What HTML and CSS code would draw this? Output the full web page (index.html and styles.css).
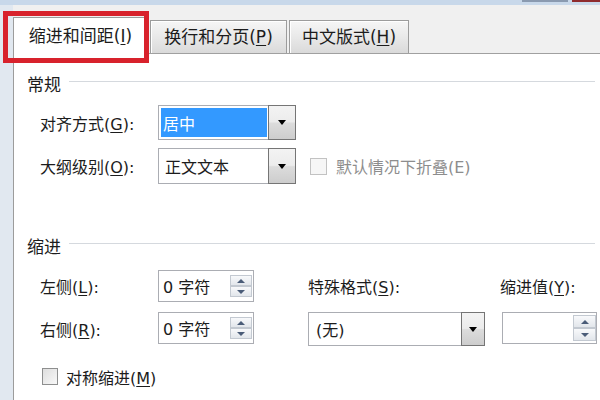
FILE: index.html
```html
<!DOCTYPE html>
<html lang="zh-CN">
<head>
<meta charset="utf-8">
<title>段落</title>
<link rel="stylesheet" href="styles.css">
</head>
<body>
<div class="screen">
  <div class="chrome-top">
    <span class="chrome-fill"></span>
    <span class="chrome-btn"></span>
    <span class="chrome-close"></span>
  </div>
  <div class="window">
    <div class="chrome-left"></div>
    <div class="dialog">
      <div class="tabs">
        <div class="tab tab-active">缩进和间距(<u>I</u>)</div>
        <div class="tab tab-wide">换行和分页(<u>P</u>)</div>
        <div class="tab tab-narrow">中文版式(<u>H</u>)</div>
      </div>
      <div class="panel">
        <div class="section-head">常规</div>
        <div class="general">
          <span class="label">对齐方式(<u>G</u>):</span>
          <div class="select">
            <span class="value value-selected">居中</span>
            <span class="dd-btn"><i class="tri-down"></i></span>
          </div>
          <span class="label">大纲级别(<u>O</u>):</span>
          <div class="select">
            <span class="value">正文文本</span>
            <span class="dd-btn"><i class="tri-down"></i></span>
          </div>
          <div class="check check-disabled"><span class="box"></span><span>默认情况下折叠(E)</span></div>
        </div>

        <div class="section-head indent-head">缩进</div>
        <div class="indent">
          <span class="label c1">左侧(<u>L</u>):</span>
          <div class="spinner c2">
            <span class="spin-text">0 字符</span>
            <span class="spin-btns"><span class="spin-btn"><i class="tri-up"></i></span><span class="spin-btn"><i class="tri-dn"></i></span></span>
          </div>
          <span class="label c4">特殊格式(<u>S</u>):</span>
          <span class="label c6 label-shift">缩进值(<u>Y</u>):</span>

          <span class="label c1">右侧(<u>R</u>):</span>
          <div class="spinner c2">
            <span class="spin-text">0 字符</span>
            <span class="spin-btns"><span class="spin-btn"><i class="tri-up"></i></span><span class="spin-btn"><i class="tri-dn"></i></span></span>
          </div>
          <div class="select select-special c4">
            <span class="value value-special">(无)</span>
            <span class="dd-btn dd-narrow"><i class="tri-down"></i></span>
          </div>
          <div class="spinner spinner-tall c6">
            <span class="spin-text"></span>
            <span class="spin-btns"><span class="spin-btn"><i class="tri-up"></i></span><span class="spin-btn"><i class="tri-dn"></i></span></span>
          </div>
        </div>

        <div class="check check-row"><span class="box box-enabled"></span><span>对称缩进(<u>M</u>)</span></div>
      </div>
    </div>
  </div>
  <div class="annotation"></div>
</div>
</body>
</html>
```

FILE: styles.css
```css
* { box-sizing: border-box; }
html, body { margin: 0; padding: 0; }
body {
  width: 600px;
  height: 400px;
  overflow: hidden;
  font-family: "DejaVu Sans", "Noto Sans CJK SC", sans-serif;
  font-size: 16px;
  color: #1c1c1c;
  background: #fff;
}
u {
  text-decoration: underline;
  text-underline-offset: 2px;
  text-decoration-thickness: 1px;
}
i { display: block; }

.screen {
  position: relative;
  width: 600px;
  height: 400px;
  overflow: hidden;
  display: flex;
  flex-direction: column;
}

/* window chrome */
.chrome-top {
  display: flex;
  height: 5px;
  flex: none;
  background: #c8d8ea;
}
.chrome-fill { flex: 1; }
.chrome-btn { width: 46px; height: 2px; margin-right: 4px; background: #8a9ab0; }
.chrome-close { width: 28px; height: 2px; background: #8f2b2e; }

.window {
  display: flex;
  flex: 1;
  min-height: 0;
}
.chrome-left {
  width: 13px;
  flex: none;
  background: #e1e8f0;
}
.dialog {
  flex: 1;
  display: flex;
  flex-direction: column;
  background: #f0f0f0;
}

/* tabs */
.tabs {
  display: flex;
  align-items: flex-end;
  gap: 2px;
  padding-top: 12px;
  border-bottom: 1px solid #a0a0a0;
  flex: none;
}
.tab {
  height: 33px;
  border: 1px solid #9c9c9c;
  border-bottom: none;
  display: flex;
  align-items: center;
  justify-content: center;
  font-size: 17px;
  line-height: 1;
  background: linear-gradient(#f6f6f6, #eaeaea 45%, #dadada);
  box-shadow: inset 1px 1px 0 #fff;
}
.tab-active {
  width: 135px;
  height: 37px;
  margin-bottom: -1px;
  background: #fff;
  box-shadow: none;
  position: relative;
}
.tab-wide { width: 137px; }
.tab-narrow { width: 120px; }

/* panel */
.panel {
  flex: 1;
  background: #fff;
  border-left: 1px solid #9c9c9c;
  padding: 19px 0 0 13px;
  overflow: hidden;
}
.section-head {
  display: flex;
  align-items: center;
  height: 20px;
  font-size: 17px;
  margin-right: 5px;
}
.section-head::after {
  content: "";
  flex: 1;
  height: 1px;
  margin-left: 8px;
  margin-top: -3px;
  background: #d5d9de;
}
.indent-head { margin-top: 51px; }

.label { white-space: nowrap; }

.general {
  display: grid;
  grid-template-columns: 118px 138px auto;
  grid-template-rows: 35px 36px;
  row-gap: 8px;
  align-items: center;
  margin: 12px 0 0 13px;
}
.general .label { grid-column: 1; }

/* select */
.select {
  align-self: stretch;
  display: flex;
  border: 1px solid #abadb3;
  background: #fff;
}
.value {
  flex: 1;
  display: flex;
  align-items: center;
  margin: 2px 1px 2px 2px;
  padding-left: 4px;
}
.value-selected {
  background: #3399ff;
  color: #fff;
  padding-left: 2px;
}
.value-special { padding-left: 5px; }
.dd-btn {
  width: 28px;
  margin: -1px -1px -1px 0;
  border: 1px solid #757575;
  background: linear-gradient(#f3f3f3, #ececec 48%, #dcdcdc 52%, #cdcdcd);
  display: flex;
  align-items: center;
  justify-content: center;
}
.dd-narrow { width: 24px; }
.tri-down {
  width: 0;
  height: 0;
  border-left: 4.5px solid transparent;
  border-right: 4.5px solid transparent;
  border-top: 5px solid #000;
}

/* checkbox */
.check {
  display: flex;
  align-items: center;
  gap: 9px;
  white-space: nowrap;
}
.general .check { margin-left: 14px; }
.check-disabled { color: #8d8d8d; }
.box {
  width: 17px;
  height: 17px;
  flex: none;
  border: 1px solid #c2c2c2;
  background: #f6f6f6;
}
.box-enabled {
  width: 16px;
  border-color: #8e8f8f;
  background: linear-gradient(135deg, #dedede, #f8f8f8);
}
.check-row {
  margin: 22px 0 0 15px;
  gap: 8px;
  height: 17px;
}

/* indent grid */
.indent {
  display: grid;
  grid-template-columns: 118px 96px 54px 177px 17px 95px;
  grid-template-rows: 32px 34px;
  row-gap: 10px;
  align-items: center;
  margin: 15px 0 0 13px;
}
.c1 { grid-column: 1; }
.c2 { grid-column: 2; }
.c4 { grid-column: 4; }
.c6 { grid-column: 6; }
.label-shift { margin-left: -2px; }

.spinner {
  align-self: start;
  height: 32px;
  display: flex;
  align-items: center;
  border: 1px solid #abadb3;
  background: #fff;
  padding: 0 1px 0 4px;
}
.select-special { height: 34px; }
.spin-btns {
  margin-left: auto;
  width: 22px;
  display: flex;
  flex-direction: column;
}
.spin-btn {
  height: 11px;
  border: 1px solid #c3c9d1;
  background: linear-gradient(#f8f9fb, #e2e6eb);
  display: flex;
  align-items: center;
  justify-content: center;
}
.spinner-tall { padding-right: 0; }
.spinner-tall .spin-btns { width: 23px; }
.spinner-tall .spin-btn { height: 13px; }
.tri-up {
  width: 0;
  height: 0;
  border-left: 4px solid transparent;
  border-right: 4px solid transparent;
  border-bottom: 4px solid #4a5c78;
}
.tri-dn {
  width: 0;
  height: 0;
  border-left: 4px solid transparent;
  border-right: 4px solid transparent;
  border-top: 4px solid #4a5c78;
}

/* red annotation frame drawn over the first tab */
.annotation {
  position: absolute;
  left: 3px;
  top: 11px;
  width: 146px;
  height: 52px;
  border: 5px solid #d8222c;
}
```
